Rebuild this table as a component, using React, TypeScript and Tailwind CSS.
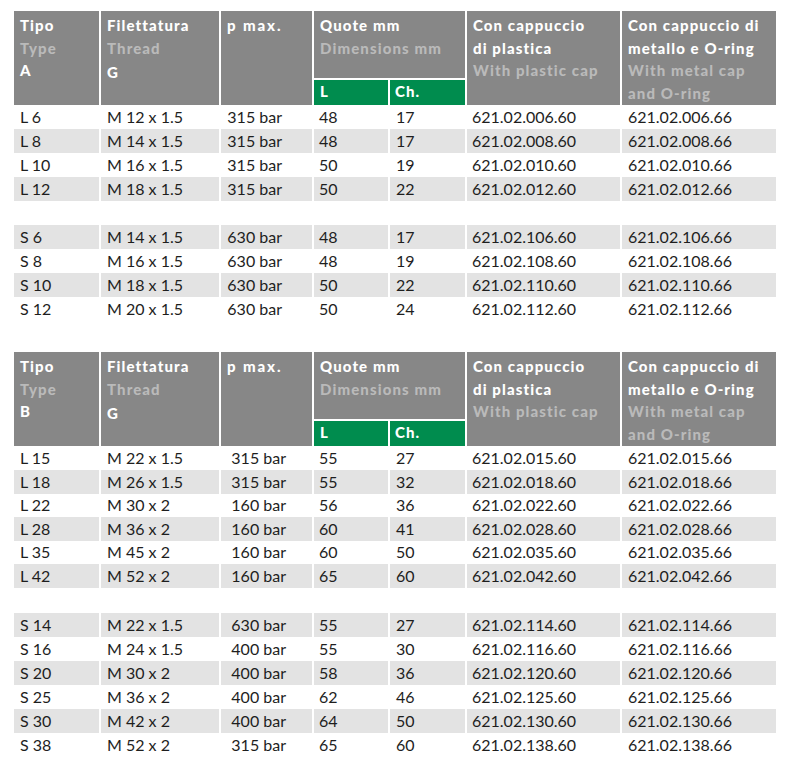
import React from "react";

const COLS = "grid grid-cols-[85px_118px_91px_74px_75px_153px_154px] gap-x-[2px]";

type Row = [string, string, string, string, string, string, string];

function Header({ letter }: { letter: string }) {
  const cell = "bg-[#878787] text-white font-black text-[15px] leading-[22.5px] tracking-[1.1px] pt-[3px]";
  const sub = "text-[#bababa]";
  return (
    <div className={`${COLS} grid-rows-[67px_25px] gap-y-[2px]`}>
      <div className={`${cell} row-span-2 pl-[6px]`}>
        <div>Tipo</div>
        <div className={sub}>Type</div>
        <div>{letter}</div>
      </div>
      <div className={`${cell} row-span-2 pl-[6px]`}>
        <div>Filettatura</div>
        <div className={sub}>Thread</div>
        <div className="mt-[2px]">G</div>
      </div>
      <div className={`${cell} row-span-2 pl-[6px]`}>
        <div className="tracking-[1.9px]">p max.</div>
      </div>
      <div className={`${cell} col-span-2 pl-[6px]`}>
        <div>Quote mm</div>
        <div className={sub}>Dimensions mm</div>
      </div>
      <div className={`${cell} row-span-2 pl-[6px]`}>
        <div>Con cappuccio</div>
        <div>di plastica</div>
        <div className={sub}>With plastic cap</div>
      </div>
      <div className={`${cell} row-span-2 pl-[6px]`}>
        <div>Con cappuccio di</div>
        <div>metallo e O-ring</div>
        <div className={sub}>With metal cap</div>
        <div className={sub}>and O-ring</div>
      </div>
      <div className="bg-[#008c4e] text-white font-black text-[15px] leading-[22px] tracking-[1.1px] pl-[6px] col-start-4 row-start-2">
        L
      </div>
      <div className="bg-[#008c4e] text-white font-black text-[15px] leading-[22px] tracking-[1.1px] pl-[5px] col-start-5 row-start-2">
        Ch.
      </div>
    </div>
  );
}

function DataRow({ r, gray, h, pr }: { r: Row; gray: boolean; h: string; pr: string }) {
  const bg = gray ? "bg-[#e3e3e3]" : "";
  const base = `${bg} flex items-center text-[16px] text-[#1e1e1e]`;
  return (
    <div className={`${COLS} ${h}`}>
      <div className={`${base} pl-[6px]`}>{r[0]}</div>
      <div className={`${base} pl-[6px]`}>{r[1]}</div>
      <div className={`${base} justify-end ${pr}`}>{r[2]}</div>
      <div className={`${base} pl-[5px]`}>{r[3]}</div>
      <div className={`${base} pl-[6px]`}>{r[4]}</div>
      <div className={`${base} pl-[5px]`}>{r[5]}</div>
      <div className={`${base} pl-[6px]`}>{r[6]}</div>
    </div>
  );
}

const tableA1: Row[] = [
  ["L 6", "M 12 x 1.5", "315 bar", "48", "17", "621.02.006.60", "621.02.006.66"],
  ["L 8", "M 14 x 1.5", "315 bar", "48", "17", "621.02.008.60", "621.02.008.66"],
  ["L 10", "M 16 x 1.5", "315 bar", "50", "19", "621.02.010.60", "621.02.010.66"],
  ["L 12", "M 18 x 1.5", "315 bar", "50", "22", "621.02.012.60", "621.02.012.66"],
];
const tableA2: Row[] = [
  ["S 6", "M 14 x 1.5", "630 bar", "48", "17", "621.02.106.60", "621.02.106.66"],
  ["S 8", "M 16 x 1.5", "630 bar", "48", "19", "621.02.108.60", "621.02.108.66"],
  ["S 10", "M 18 x 1.5", "630 bar", "50", "22", "621.02.110.60", "621.02.110.66"],
  ["S 12", "M 20 x 1.5", "630 bar", "50", "24", "621.02.112.60", "621.02.112.66"],
];
const tableB1: Row[] = [
  ["L 15", "M 22 x 1.5", "315 bar", "55", "27", "621.02.015.60", "621.02.015.66"],
  ["L 18", "M 26 x 1.5", "315 bar", "55", "32", "621.02.018.60", "621.02.018.66"],
  ["L 22", "M 30 x 2", "160 bar", "56", "36", "621.02.022.60", "621.02.022.66"],
  ["L 28", "M 36 x 2", "160 bar", "60", "41", "621.02.028.60", "621.02.028.66"],
  ["L 35", "M 45 x 2", "160 bar", "60", "50", "621.02.035.60", "621.02.035.66"],
  ["L 42", "M 52 x 2", "160 bar", "65", "60", "621.02.042.60", "621.02.042.66"],
];
const tableB2: Row[] = [
  ["S 14", "M 22 x 1.5", "630 bar", "55", "27", "621.02.114.60", "621.02.114.66"],
  ["S 16", "M 24 x 1.5", "400 bar", "55", "30", "621.02.116.60", "621.02.116.66"],
  ["S 20", "M 30 x 2", "400 bar", "58", "36", "621.02.120.60", "621.02.120.66"],
  ["S 25", "M 36 x 2", "400 bar", "62", "46", "621.02.125.60", "621.02.125.66"],
  ["S 30", "M 42 x 2", "400 bar", "64", "50", "621.02.130.60", "621.02.130.66"],
  ["S 38", "M 52 x 2", "315 bar", "65", "60", "621.02.138.60", "621.02.138.66"],
];

const b1Heights = ["h-[24px]", "h-[23px]", "h-[24px]", "h-[23px]", "h-[24px]", "h-[23px]"];

export default function App() {
  return (
    <div
      className="w-[792px] h-[758px] bg-white pt-[11px] pl-[14px] overflow-hidden"
      style={{ fontFamily: "Lato, 'Noto Sans', sans-serif" }}
    >
      <Header letter="A" />
      {tableA1.map((r, i) => (
        <DataRow key={r[0]} r={r} gray={i % 2 === 1} h="h-[24px]" pr="pr-[30px]" />
      ))}
      <div className="h-[24px]" />
      {tableA2.map((r, i) => (
        <DataRow key={r[0]} r={r} gray={i % 2 === 0} h="h-[24px]" pr="pr-[30px]" />
      ))}
      <div className="h-[31px]" />
      <Header letter="B" />
      {tableB1.map((r, i) => (
        <DataRow key={r[0]} r={r} gray={i % 2 === 1} h={b1Heights[i]} pr="pr-[26px]" />
      ))}
      <div className="h-[26px]" />
      {tableB2.map((r, i) => (
        <DataRow key={r[0]} r={r} gray={i % 2 === 0} h="h-[24px]" pr="pr-[26px]" />
      ))}
    </div>
  );
}
